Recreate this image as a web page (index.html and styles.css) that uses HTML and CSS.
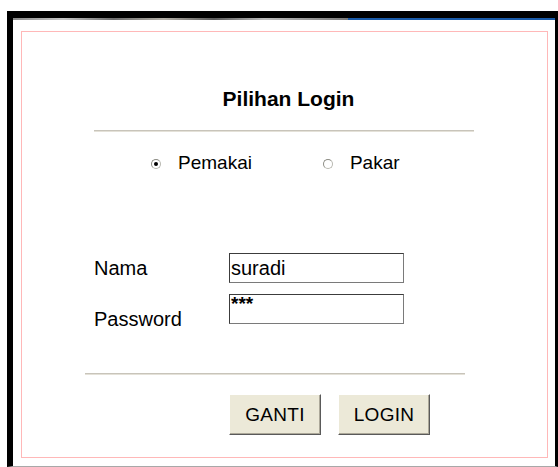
FILE: index.html
```html
<!DOCTYPE html>
<html>
<head>
<meta charset="utf-8">
<title>Pilihan Login</title>
<link rel="stylesheet" href="styles.css">
</head>
<body>
<div class="window">
  <div class="titlebar"><span class="bar-grey"></span><span class="bar-blue"></span></div>
  <div class="client">
    <form class="panel">
      <h1 class="heading">Pilihan Login</h1>
      <div class="rule rule-top"></div>
      <div class="choices">
        <label class="choice choice-user"><span class="radio checked"></span>Pemakai</label>
        <label class="choice choice-expert"><span class="radio"></span>Pakar</label>
      </div>
      <div class="fields">
        <div class="row">
          <span class="label">Nama</span>
          <div class="field">suradi</div>
        </div>
        <div class="row">
          <span class="label label-low">Password</span>
          <div class="field field-pass">***</div>
        </div>
      </div>
      <div class="rule rule-bottom"></div>
      <div class="actions">
        <button type="button" class="btn">GANTI</button>
        <button type="button" class="btn">LOGIN</button>
      </div>
    </form>
  </div>
</div>
</body>
</html>
```
FILE: styles.css
```css
html, body {
  margin: 0;
  padding: 0;
  background: #ffffff;
}

body {
  font-family: "Liberation Sans", Arial, sans-serif;
  color: #000;
  padding: 11px 0 0 7px;
  width: 551px;
  height: 456px;
  overflow: hidden;
}

.window {
  box-sizing: border-box;
  width: 551px;
  height: 456px;
  border-left: 6px solid #000;
  border-right: 3px solid #000;
  border-bottom: 1px solid #a8a8a8;
  background: #fff;
  display: flex;
  flex-direction: column;
}

.titlebar {
  height: 9px;
  background: #000;
  display: flex;
  align-items: flex-end;
  box-sizing: border-box;
  border-top: 6px solid #000;
}

.bar-grey {
  width: 335px;
  height: 2px;
  background: linear-gradient(90deg, #8a8a8a, #c8c8c8 15%, #6e6e6e 30%, #b4b0a8 45%, #5c5c5c 60%, #bdbdbd 75%, #7a7a7a);
}

.bar-blue {
  flex: 1;
  height: 2px;
  background: #1a5aa8;
}

.client {
  flex: 1;
  padding: 11px 7px 8px 8px;
  display: flex;
}

.panel {
  flex: 1;
  border: 1px solid #ffb8b8;
  margin: 0;
  padding: 0;
}

.heading {
  margin: 57px 0 0 0;
  font-size: 21px;
  line-height: 20px;
  font-weight: bold;
  text-align: center;
  padding-left: 8px;
}

.rule {
  width: 380px;
  height: 0;
  border-top: 1px solid #c8c4ba;
  border-bottom: 1px solid #e4e1d8;
}

.rule-top {
  margin: 21px 0 0 72px;
}

.rule-bottom {
  margin: 49px 0 0 63px;
}

.choices {
  margin-top: 21px;
  height: 20px;
  display: flex;
  font-size: 19px;
  line-height: 20px;
}

.choice {
  display: flex;
  align-items: center;
}

.choice-user {
  margin-left: 129px;
}

.choice-expert {
  margin-left: 71px;
}

.radio {
  width: 8px;
  height: 8px;
  border-radius: 50%;
  border: 1px solid #b8b8b0;
  border-top-color: #8c8c84;
  border-left-color: #8c8c84;
  background: #fff;
  margin-right: 17px;
  position: relative;
  top: 1px;
}

.radio.checked::after {
  content: "";
  position: absolute;
  left: 2px;
  top: 2px;
  width: 4px;
  height: 4px;
  border-radius: 50%;
  background: #000;
}

.fields {
  margin-top: 80px;
  display: flex;
  flex-direction: column;
  gap: 11px;
}

.row {
  display: flex;
  align-items: center;
  padding-left: 72px;
  height: 30px;
}

.label {
  width: 135px;
  font-size: 20px;
  line-height: 20px;
}

.label-low {
  position: relative;
  top: 10px;
}

.field {
  box-sizing: border-box;
  width: 175px;
  height: 30px;
  border: 1px solid #3c3c3c;
  border-right-color: #7a7a7a;
  border-bottom-color: #7a7a7a;
  font-size: 20px;
  line-height: 28px;
  padding-left: 1px;
  background: #fff;
}

.field-pass {
  font-size: 19px;
  line-height: 18px;
  font-weight: bold;
}

.actions {
  margin-top: 19px;
  display: flex;
  gap: 17px;
  padding-left: 207px;
}

.btn {
  box-sizing: border-box;
  width: 92px;
  height: 41px;
  background: #ece9d8;
  border: 1px solid;
  border-color: #ffffff #5a5a5a #5a5a5a #ffffff;
  box-shadow: inset -1px -1px 0 #aca899;
  font-family: "Liberation Sans", Arial, sans-serif;
  font-size: 19px;
  color: #000;
  padding: 0;
  letter-spacing: 0.3px;
}
```
